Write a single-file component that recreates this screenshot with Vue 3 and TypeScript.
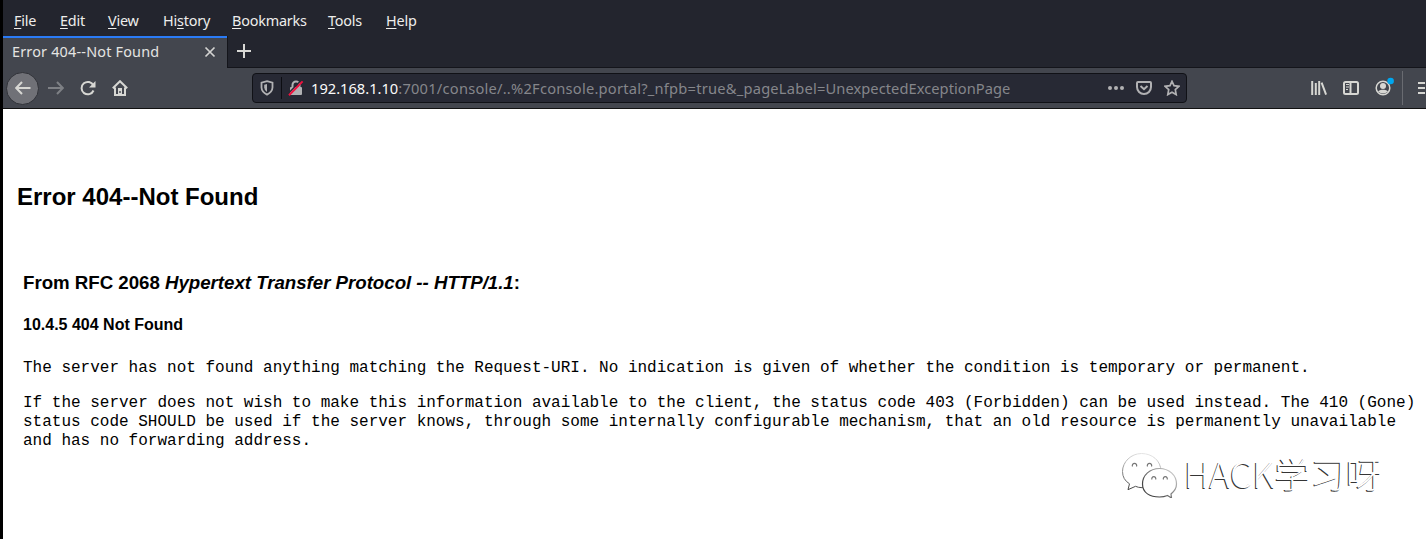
<script setup lang="ts">
interface MenuItem { before: string; key: string; after: string; width: number }

const menus: MenuItem[] = [
  { before: '', key: 'F', after: 'ile', width: 46 },
  { before: '', key: 'E', after: 'dit', width: 48 },
  { before: '', key: 'V', after: 'iew', width: 55 },
  { before: 'Hi', key: 's', after: 'tory', width: 69 },
  { before: '', key: 'B', after: 'ookmarks', width: 96 },
  { before: '', key: 'T', after: 'ools', width: 58 },
  { before: '', key: 'H', after: 'elp', width: 50 },
]
</script>

<template>
  <div class="window">
    <nav class="menubar">
      <span v-for="m in menus" :key="m.key + m.after" class="menu" :style="{ width: m.width + 'px' }">{{ m.before }}<span class="key">{{ m.key }}</span>{{ m.after }}</span>
    </nav>
    <div class="tabs">
      <div class="tab">
        <span class="tab-title">Error 404--Not Found</span>
        <svg class="close" width="12" height="12" viewBox="0 0 12 12"><path d="M1.5 1.5l9 9M10.5 1.5l-9 9" /></svg>
      </div>
      <svg class="plus" width="16" height="16" viewBox="0 0 16 16"><path d="M8 1v14M1 8h14" /></svg>
    </div>
    <div class="toolbar">
      <div class="back">
        <svg class="ic" width="16" height="16" viewBox="0 0 16 16"><path d="M15.5 8H1.5M7 2L1.2 8L7 14" /></svg>
      </div>
      <svg class="ic forward" width="16" height="16" viewBox="0 0 16 16"><path d="M0 8h14.5M9 2l5.8 6L9 14" /></svg>
      <svg class="ic reload" width="16" height="16" viewBox="0 0 16 16"><path d="M13.4 5.5A6.2 6.2 0 1 0 13.5 10.5" /><path class="solid" d="M15.5 1v6.5H9z" /></svg>
      <svg class="ic home" width="16" height="16" viewBox="0 0 16 16"><path d="M.8 8.2L8 1.2l7.2 7M3 7.5V15h10V7.5" /><path class="solid" d="M6 8h4v7H6z" /><path class="hole" d="M8 11v2" /></svg>
      <div class="urlbar">
        <svg class="ic shield" width="14" height="16" viewBox="0 0 14 16"><path d="M7 1.2L12.5 2.6V7.5Q12.3 12 7 14.6Q1.7 12 1.5 7.5V2.6z" /><path class="solid" d="M7 4L4.2 4.7V7.5Q4.3 10.2 7 12z" /></svg>
        <span class="divider"></span>
        <svg class="ic lock" width="16" height="16" viewBox="0 0 16 16"><path d="M4.5 7V5a3.5 3.5 0 0 1 7 0v2" /><rect class="solid" x="2" y="7" width="12" height="8" rx="1" /><path class="gap" d="M.2 13.5L13 .5" /><path class="slash" d="M1 15.2L14.6 1.4" /></svg>
        <span class="url"><b>192.168.1.10</b>:7001/console/..%2Fconsole.portal?_nfpb=true&amp;_pageLabel=<span class="label-value">UnexpectedExceptionPage</span></span>
        <svg class="ic dots" width="18" height="16" viewBox="0 0 18 16"><circle cx="3" cy="8" r="2" /><circle cx="9" cy="8" r="2" /><circle cx="15" cy="8" r="2" /></svg>
        <svg class="ic pocket" width="16" height="16" viewBox="0 0 16 16"><path d="M2 2h12Q15 2 15 3v4a7 7 0 0 1-14 0V3Q1 2 2 2zM4.5 6L8 9.2L11.5 6" /></svg>
        <svg class="ic star" width="16" height="16" viewBox="0 0 16 16"><path d="M8 1.3l2 4.4 4.9.6-3.6 3.3.9 5L8 12.2l-4.2 2.4.9-5L1.1 6.3 6 5.7z" /></svg>
      </div>
      <svg class="ic library" width="16" height="16" viewBox="0 0 16 16"><path d="M1.2 1v14M4.8 3v12M8.2 1v14M10.6 2.6l4.5 12" /></svg>
      <svg class="ic sidebar" width="16" height="16" viewBox="0 0 16 16"><rect x="1" y="2" width="14" height="12" rx="1.5" /><path d="M7.5 2v12" /><path class="thin" d="M3 4.5h3M3 7h3M3 9.5h2" /></svg>
      <svg class="ic account" width="20" height="22" viewBox="0 0 20 22"><circle class="ring" cx="8" cy="12" r="6.8" /><circle class="solid" cx="8" cy="10" r="3" /><path class="solid" d="M3 15.6Q5 13.2 8 13.8Q11 13.2 13 15.6Q8 19.5 3 15.6z" /><circle class="badge" cx="15.6" cy="5" r="3.3" /></svg>
      <span class="sep"></span>
      <svg class="ic burger" width="8" height="16" viewBox="0 0 8 16"><path d="M1 3h12M1 8h12M1 13h12" /></svg>
    </div>
    <main class="page">
      <h2>Error 404--Not Found</h2>
      <section>
        <h3>From RFC 2068 <i>Hypertext Transfer Protocol -- HTTP/1.1</i>:</h3>
        <h4>10.4.5 404 Not Found</h4>
        <p>The server has not found anything matching the Request-URI. No indication is given of whether the condition is temporary or permanent.</p>
        <p>If the server does not wish to make this information available to the client, the status code 403 (Forbidden) can be used instead. The 410 (Gone)<br>status code SHOULD be used if the server knows, through some internally configurable mechanism, that an old resource is permanently unavailable<br>and has no forwarding address.</p>
      </section>
      <div class="watermark">
        <svg width="58" height="50" viewBox="0 0 58 50">
          <defs>
            <linearGradient id="edge" x1="0.6" y1="0" x2="0.4" y2="1">
              <stop offset="0" stop-color="#e6e6e6" />
              <stop offset="0.5" stop-color="#999" />
              <stop offset="1" stop-color="#444" />
            </linearGradient>
            <linearGradient id="front" x1="1" y1="0.2" x2="0.3" y2="0.8">
              <stop offset="0" stop-color="#ccc" />
              <stop offset="1" stop-color="#444" />
            </linearGradient>
          </defs>
          <path class="rear" d="M9.5 35.800L8 41.700L15.5 38.300Q18 39.500 22 39.700C33 39.500 41 33 41 23.500C41 12.500 32 5.500 21.500 5.500S2.500 14 2.500 23.500Q2.500 31.500 9.500 35.800z" />
          <path class="fore" d="M47.500 47.500L51.500 50L51 46Q56.500 41.500 56.500 36C56.500 27 49 20.500 39.500 20.500S22.500 27 22.500 36S30 49 39.500 49Q44 49 47.500 47.500z" />
          <path class="eye" d="M12.500 18.500a2.200 2.200 0 1 1 4 0M27.500 18.500a2.200 2.200 0 1 1 4 0M32 31.500a2 2 0 1 1 3.600 0M43.500 31.500a2 2 0 1 1 3.600 0" />
        </svg>
        <span class="brand">HACK学习呀</span>
      </div>
    </main>
  </div>
</template>

<style>
body { margin: 0; background: #fff; overflow: hidden; }
</style>

<style scoped>
* { box-sizing: border-box; }
.window { width: 1426px; height: 539px; overflow: hidden; border-left: 3px solid #000; background: #fff; font: 14.67px/20px "Noto Sans", sans-serif; }
svg { display: block; flex: none; fill: none; }
.menubar { height: 36px; background: #23252e; display: flex; padding: 11px 0 0 11px; color: #eeeeec; font-size: 14.4px; letter-spacing: -.2px; }
.menu { flex: none; white-space: nowrap; }
.key { text-decoration: underline; text-decoration-thickness: 1px; text-underline-offset: 2px; }
.tabs { height: 32px; background: #23252e; box-shadow: inset 225px 0 0 #14151b; display: flex; border-bottom: 1px solid #14151b; }
.tab { width: 224px; height: 32px; flex: none; background: #43464e; border-top: 2px solid #2a7bf6; display: flex; align-items: center; padding: 0 11px 0 9px; }
.tab-title { flex: 1; margin-top: -2px; color: #e4e4e2; font-size: 14.4px; letter-spacing: .2px; white-space: nowrap; }
.close { margin-top: -2px; stroke: #d3d3d1; stroke-width: 1.7; }
.plus { margin: 7px 0 0 9px; stroke: #d8d8d5; stroke-width: 2; }
.toolbar { height: 41px; background: #43464e; border-bottom: 1px solid #111; display: flex; align-items: center; padding-left: 4px; }
.toolbar > * { flex: none; }
.ic { stroke: #d7d7d3; stroke-width: 2; }
.solid { fill: #d7d7d3; stroke: none; }
.back { width: 33px; height: 33px; margin-left: -1px; border: 1px solid #303238; border-radius: 50%; background: #707177; display: flex; align-items: center; justify-content: center; }
.forward { margin-left: 9px; stroke: #7e8085; }
.reload { margin-left: 16px; }
.home { margin-left: 16px; }
.hole { stroke: #43464e; stroke-width: 1.4; }
.urlbar { width: 935px; height: 30px; margin-left: 124px; background: #272934; border: 1px solid #101116; border-radius: 4px; display: flex; align-items: center; padding-left: 7px; }
.urlbar .ic { stroke: #b1b1b3; }
.urlbar .solid { fill: #b1b1b3; }
.divider { width: 1px; height: 22px; margin: 0 6px 0 7px; background: #0c0d12; }
.shield { stroke-width: 1.8; }
.urlbar .lock .gap { stroke: #272934; stroke-width: 1.5; }
.lock .slash { stroke: #f0123f; stroke-width: 2; }
.url { width: 796px; margin-left: 7px; flex: none; color: #85868b; letter-spacing: .23px; white-space: nowrap; }
.url b { font-weight: 400; color: #fafafa; letter-spacing: 0; }
.label-value { letter-spacing: .05px; }
.urlbar .dots { fill: #b1b1b3; stroke: none; }
.pocket { margin-left: 11px; }
.star { margin-left: 12px; }
.urlbar .star { stroke-width: 1.7; }
.library { margin-left: 124px; }
.sidebar { margin-left: 16px; }
.thin { stroke-width: 1.2; }
.account { margin: -3px 0 0 16px; }
.ring { stroke-width: 1.5; }
.badge { fill: #00a7ef; stroke: none; }
.sep { width: 1px; height: 34px; margin-left: 7px; background: #696b71; }
.burger { margin-left: 14px; }
.page { padding: 73px 0 0 14px; color: #000; font-family: "Liberation Sans", Arial, sans-serif; }
h2, h3, h4, p { margin: 0; white-space: nowrap; }
h2 { font-size: 24px; line-height: 30px; }
section { padding: 59px 0 0 6px; }
h3 { font-size: 18.72px; line-height: 24px; letter-spacing: -.03px; }
h4 { margin-top: 20px; font-size: 16px; line-height: 20px; }
p { font: 16px/19px "Liberation Mono", monospace; }
h4 + p { margin-top: 24px; }
p + p { margin-top: 16px; }
.watermark { height: 54px; margin: -3px 0 0 1103px; display: flex; align-items: flex-start; opacity: .99; }
.rear { fill: #fff; stroke: url(#edge); stroke-width: 1; }
.fore { fill: #fff; stroke: url(#front); stroke-width: 1.2; }
.eye { stroke: #777; stroke-width: 1.2; }
.brand { margin: 0 0 0 6px; color: #fff; font: 300 35.7px/50px "Noto Sans CJK SC", sans-serif; white-space: nowrap; text-shadow: -1px 1px 0 #333; }
</style>
